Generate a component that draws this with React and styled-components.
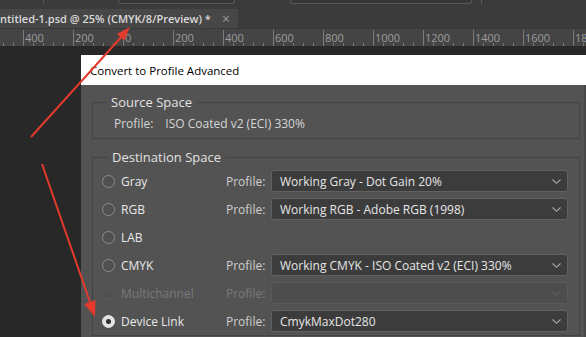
import React from 'react';
import styled, { createGlobalStyle } from 'styled-components';

const GlobalStyle = createGlobalStyle`
html, body {
  margin: 0;
  padding: 0;
  background: #282828;
}
body {
  font-family: "Open Sans", "Noto Sans", sans-serif;
}
`

const rulerLabels = ['400', '200', '0', '200', '400', '600', '800', '1000', '1200', '1400', '1600', '1800'];

const destinations = [
    { name: 'Gray', profile: 'Working Gray - Dot Gain 20%' },
    { name: 'RGB', profile: 'Working RGB - Adobe RGB (1998)' },
    { name: 'LAB' },
    { name: 'CMYK', profile: 'Working CMYK - ISO Coated v2 (ECI) 330%' },
    { name: 'Multichannel', profile: '', disabled: true },
    { name: 'Device Link', profile: 'CmykMaxDot280', checked: true },
];

const Chevron = ({ disabled }) => (
    <svg width="9" height="5" viewBox="0 0 9 5">
        <path d="M0.5 0.5 L4.5 4.3 L8.5 0.5" fill="none" stroke={disabled ? '#5f5f5f' : '#a9a9a9'} strokeWidth="1.1" />
    </svg>
)

const App = () => {
    return (
        <Screen>
            <GlobalStyle />
            <TopStrip>
                <StripDivider $left={43} />
                <StripField $left={74} $width={117} />
                <StripField $left={55} $width={182} />
                <StripDivider $left={9} />
            </TopStrip>
            <TabBar>
                <Tab>
                    <TabTitle>ntitled-1.psd @ 25% (CMYK/8/Preview) *</TabTitle>
                    <TabClose>×</TabClose>
                </Tab>
            </TabBar>
            <Ruler>
                {rulerLabels.map((label, i) => (
                    <RulerSegment key={i}>{label}</RulerSegment>
                ))}
            </Ruler>
            <Workspace>
                <CanvasGap />
                <Dialog>
                    <TitleBar>Convert to Profile Advanced</TitleBar>
                    <DialogBody>
                        <Group>
                            <Legend $offset={-7}>Source Space</Legend>
                            <SourceLine>
                                <span>Profile:</span>
                                <span>ISO Coated v2 (ECI) 330%</span>
                            </SourceLine>
                        </Group>
                        <Group $gap={10} $dest>
                            <Legend $offset={6}>Destination Space</Legend>
                            {destinations.map(d => (
                                <DestRow key={d.name}>
                                    <RadioLabel $disabled={d.disabled}>
                                        <Radio $checked={d.checked} $disabled={d.disabled} />
                                        {d.name}
                                    </RadioLabel>
                                    {d.profile !== undefined && (
                                        <>
                                            <ProfileLabel $disabled={d.disabled}>Profile:</ProfileLabel>
                                            <Select $disabled={d.disabled}>
                                                <span>{d.profile}</span>
                                                <Chevron disabled={d.disabled} />
                                            </Select>
                                        </>
                                    )}
                                </DestRow>
                            ))}
                        </Group>
                    </DialogBody>
                </Dialog>
            </Workspace>
            <Arrows width="586" height="337" viewBox="0 0 586 337">
                <line x1="31" y1="137" x2="124" y2="34" stroke="#e23a2d" strokeWidth="2" />
                <polygon points="130,27 124.3,40.7 116.9,34.1" fill="#e23a2d" />
                <line x1="42" y1="164" x2="91" y2="305" stroke="#e23a2d" strokeWidth="2" />
                <polygon points="95,317 95.5,299.9 84.1,303.9" fill="#e23a2d" />
            </Arrows>
        </Screen>
    )
}

const Screen = styled.div`
position: relative;
width: 586px;
height: 337px;
overflow: hidden;
display: flex;
flex-direction: column;
background: #282828;
`

const TopStrip = styled.div`
height: 9px;
flex: none;
display: flex;
align-items: flex-start;
background: #3b3b3b;
`

const StripDivider = styled.div`
width: 1px;
height: 4px;
margin-left: ${p => p.$left}px;
background: #5a5a5a;
`

const StripField = styled.div`
width: ${p => p.$width}px;
height: 4px;
box-sizing: border-box;
margin-left: ${p => p.$left}px;
border: 1px solid #585858;
border-top: none;
border-radius: 0 0 3px 3px;
background: #363636;
`

const TabBar = styled.div`
height: 19px;
flex: none;
display: flex;
background: #3b3b3b;
`

const Tab = styled.div`
width: 238px;
display: flex;
align-items: center;
background: #474747;
color: #dadada;
`

const TabTitle = styled.span`
font-size: 11px;
font-weight: 600;
white-space: nowrap;
`

const TabClose = styled.span`
margin-left: auto;
margin-right: 8px;
font-size: 14px;
color: #9a9a9a;
`

const Ruler = styled.div`
height: 18px;
flex: none;
box-sizing: border-box;
display: flex;
padding-left: 23px;
border-top: 1px solid #3a3a3a;
background:
  repeating-linear-gradient(to right, #777 0 1px, transparent 1px 10px) 3px 100% / 100% 3px no-repeat,
  #444;
`

const RulerSegment = styled.div`
width: 50px;
flex: none;
box-sizing: border-box;
height: 15px;
margin-top: 1px;
padding: 2px 0 0 1px;
border-left: 1px solid #7c7c7c;
font-size: 11px;
line-height: 11px;
color: #9d9d9d;
`

const Workspace = styled.div`
flex: 1;
display: flex;
padding-top: 9px;
min-height: 0;
`

const CanvasGap = styled.div`
width: 81px;
flex: none;
`

const Dialog = styled.div`
flex: 1;
display: flex;
flex-direction: column;
`

const TitleBar = styled.div`
height: 30px;
flex: none;
display: flex;
align-items: center;
padding-left: 9px;
background: #fff;
color: #000;
font-size: 11.5px;
`

const DialogBody = styled.div`
flex: 1;
padding: 9px 4px 0 11px;
background: #535353;
border-right: 2px solid #484848;
`

const Group = styled.fieldset`
margin: ${p => p.$gap || 0}px 0 0;
padding: ${p => p.$dest ? '2px 11px 0 9px' : '6px 0 6px 21px'};
border: 1px solid #444;
min-width: 0;
`

const Legend = styled.legend`
margin-left: ${p => p.$offset}px;
padding: 0 4px;
font-size: 13px;
line-height: 16px;
color: #e2e2e2;
`

const SourceLine = styled.div`
display: flex;
gap: 12px;
font-size: 12px;
line-height: 16px;
color: #d6d6d6;
`

const DestRow = styled.div`
display: grid;
grid-template-columns: 124px 45px 1fr;
align-items: center;
height: 28px;
font-size: 12px;
`

const RadioLabel = styled.label`
display: flex;
align-items: center;
gap: 6px;
color: ${p => p.$disabled ? '#7a7a7a' : '#e8e8e8'};
`

const Radio = styled.span`
position: relative;
width: 13px;
height: 13px;
box-sizing: border-box;
border-radius: 50%;
border: 1px solid ${p => p.$disabled ? '#5c5c5c' : p.$checked ? '#e3e3e3' : '#8c8c8c'};
background: ${p => p.$checked ? '#e3e3e3' : '#505050'};
&::after {
  content: '';
  display: ${p => p.$checked ? 'block' : 'none'};
  position: absolute;
  left: 3px;
  top: 3px;
  width: 5px;
  height: 5px;
  border-radius: 50%;
  background: #2e2e2e;
}
`

const ProfileLabel = styled.span`
color: ${p => p.$disabled ? '#7a7a7a' : '#d0d0d0'};
`

const Select = styled.div`
height: 22px;
box-sizing: border-box;
display: flex;
align-items: center;
justify-content: space-between;
padding: 0 6px 0 8px;
border: 1px solid ${p => p.$disabled ? '#5a5a5a' : '#616161'};
border-radius: 3px;
background: ${p => p.$disabled ? '#4d4d4d' : '#3c3c3c'};
color: #e6e6e6;
white-space: nowrap;
`

const Arrows = styled.svg`
position: absolute;
left: 0;
top: 0;
pointer-events: none;
`

export default App;
